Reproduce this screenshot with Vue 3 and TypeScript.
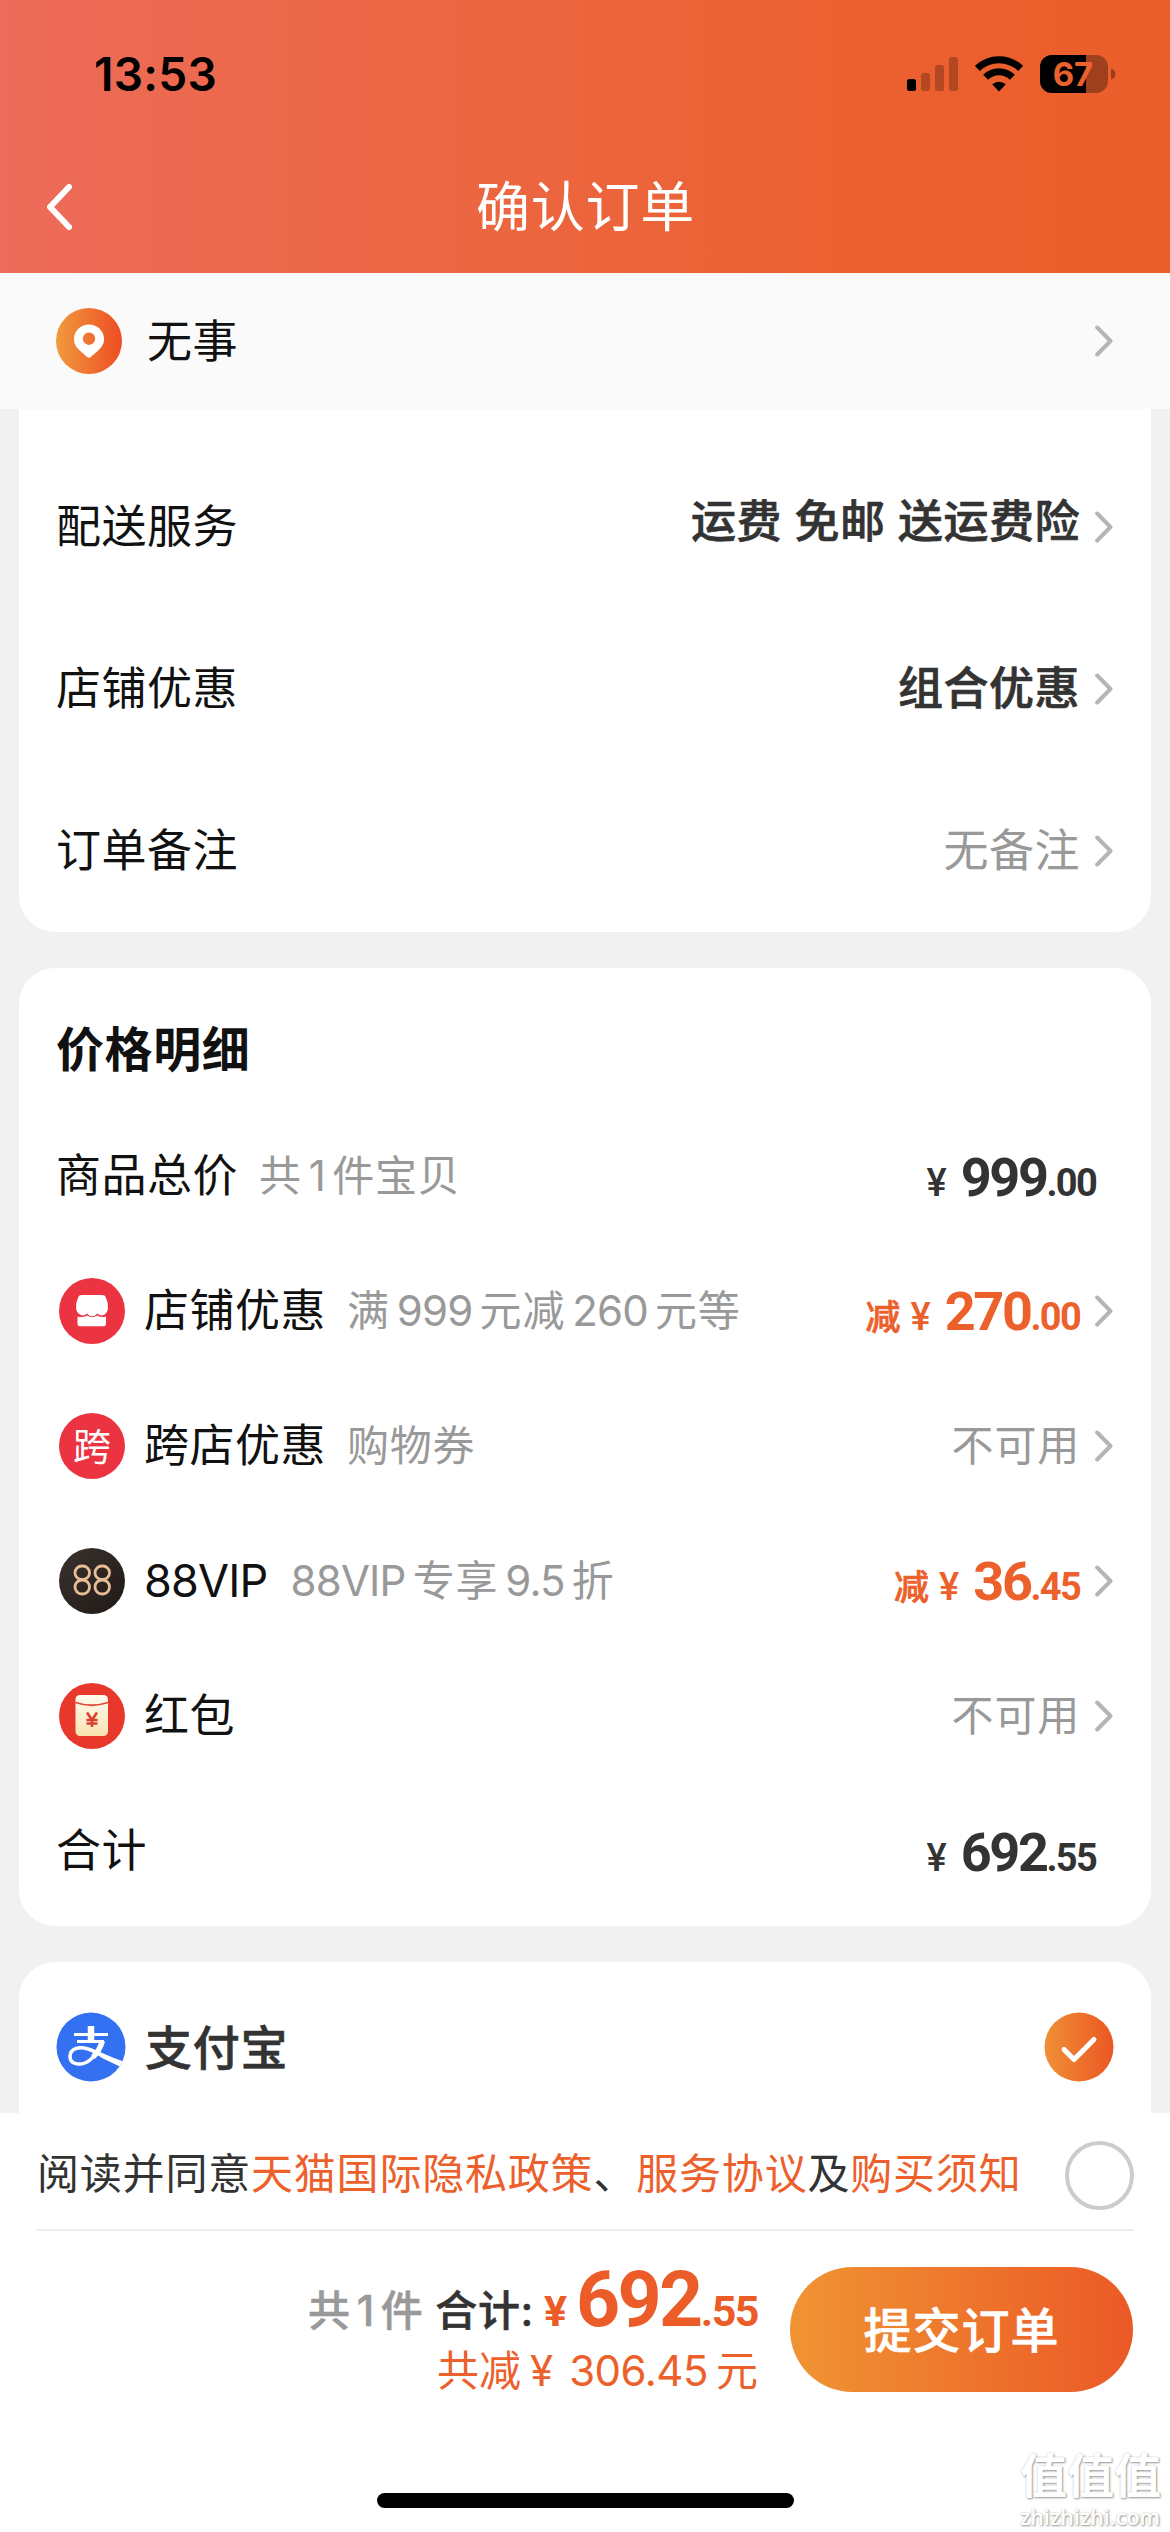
<script setup lang="ts">
interface OptionRow {
  label: string
  value: string
  tone: 'strong' | 'muted'
  raised?: boolean
}

interface PriceRow {
  label: string
  icon?: 'shop' | 'cross' | 'vip' | 'packet'
  note?: string
  minus?: boolean
  amount?: [string, string]
  disabled?: string
  arrow?: boolean
}

const options: OptionRow[] = [
  { label: '配送服务', value: '运费 免邮 送运费险', tone: 'strong', raised: true },
  { label: '店铺优惠', value: '组合优惠', tone: 'strong' },
  { label: '订单备注', value: '无备注', tone: 'muted' },
]

const prices: PriceRow[] = [
  { label: '商品总价', note: '共1件宝贝', amount: ['999', '.00'] },
  { label: '店铺优惠', icon: 'shop', note: '满999元减260元等', minus: true, amount: ['270', '.00'], arrow: true },
  { label: '跨店优惠', icon: 'cross', note: '购物券', disabled: '不可用', arrow: true },
  { label: '88VIP', icon: 'vip', note: '88VIP专享9.5折', minus: true, amount: ['36', '.45'], arrow: true },
  { label: '红包', icon: 'packet', disabled: '不可用', arrow: true },
  { label: '合计', amount: ['692', '.55'] },
]

// Latin runs get their own spacing between the Chinese characters.
const isLatin = (text: string) => /^[\w.]+$/.test(text)
const runs = (text: string) => text.split(/([\w.]+)/).filter(Boolean)
</script>

<template>
  <div class="screen">
    <header class="header">
      <div class="status">
        <span class="time">13:53</span>
        <div class="status-icons">
          <svg class="signal" width="51" height="38" viewBox="0 0 51 38">
            <rect x="0" y="24" width="9" height="12" rx="2.5" />
            <g opacity=".24">
              <rect x="14" y="18" width="9" height="18" rx="2.5" />
              <rect x="28" y="10" width="9" height="26" rx="2.5" />
              <rect x="42" y="2" width="9" height="34" rx="2.5" />
            </g>
          </svg>
          <svg class="wifi" width="48" height="38" viewBox="0 0 48 38">
            <g fill="none" stroke="#000" stroke-width="7">
              <path d="M2.400 13.400a31 31 0 0 1 43.200 0" />
              <path d="M10.600 22.200a19 19 0 0 1 26.800 0" />
            </g>
            <path d="M24 36.500l-6.800-7.200a10 10 0 0 1 13.600 0z" />
          </svg>
          <svg class="battery" width="77" height="38" viewBox="0 0 77 38">
            <defs>
              <clipPath id="battery-level"><rect width="46" height="38" /></clipPath>
            </defs>
            <rect width="68" height="38" rx="12" opacity=".32" />
            <rect width="68" height="38" rx="12" clip-path="url(#battery-level)" />
            <path d="M71 13.500q4.500 1.500 4.500 5.500t-4.500 5.500z" opacity=".35" />
            <text x="33" y="31" text-anchor="middle" class="battery-text">67</text>
          </svg>
        </div>
      </div>
      <div class="nav">
        <svg class="back" width="30" height="50" viewBox="0 0 30 50">
          <path d="M25 5L6 25l19 20" fill="none" stroke="#fff" stroke-width="6" stroke-linecap="round" stroke-linejoin="round" />
        </svg>
        <h1>确认订单</h1>
      </div>
    </header>

    <section class="address">
      <svg width="66" height="66" viewBox="0 0 66 66">
        <defs>
          <linearGradient id="pin-bg"><stop stop-color="#f09a3e" /><stop offset="1" stop-color="#ee4d23" /></linearGradient>
        </defs>
        <circle cx="33" cy="33" r="33" fill="url(#pin-bg)" />
        <path fill="#fff" fill-rule="evenodd" d="M33 16.500c8.500 0 15 6.500 15 14.500 0 5-2.200 8.200-5.500 11.200l-7.400 6.600q-2.100 1.700-4.200 0l-7.400-6.600C20.200 39.200 18 36 18 31c0-8 6.500-14.500 15-14.500zm0 8a6.200 6.200 0 1 0 0 12.400 6.200 6.200 0 0 0 0-12.400z" />
      </svg>
      <span class="label">无事</span>
      <svg class="arrow" width="18" height="32" viewBox="0 0 18 32"><path d="M2.200 2.500L15.500 16 2.200 29.500" /></svg>
    </section>

    <section class="card options">
      <div v-for="row in options" :key="row.label" class="option">
        <span class="label">{{ row.label }}</span>
        <span class="value" :class="[row.tone, { raised: row.raised }]">{{ row.value }}</span>
        <svg class="arrow" width="18" height="32" viewBox="0 0 18 32"><path d="M2.200 2.500L15.500 16 2.200 29.500" /></svg>
      </div>
    </section>

    <section class="card prices">
      <h2>价格明细</h2>
      <div v-for="row in prices" :key="row.label" class="price-row">
        <svg v-if="row.icon" class="badge" width="66" height="66" viewBox="0 0 66 66">
          <template v-if="row.icon === 'shop'">
            <circle cx="33" cy="33" r="33" fill="#eb3342" />
            <path fill="#fff" d="M22.500 17h21q2.500 0 3.300 2.200l2 6v6q-.8 5-5.800 6.300-2.600.2-4.600-2-2.300 2.800-5.200 2.800t-5.200-2.800q-2 2.200-4.600 2-5-1.300-6.200-6.300v-6l2-6q.8-2.200 3.300-2.200z" />
            <path fill="#fff" d="M18.500 38.500q5.200 1.500 9.700-1 5 3.600 10 0 4.300 2.500 8.800 1V46q0 2.200-2.200 2.200H20.700q-2.200 0-2.200-2.200z" />
          </template>
          <template v-else-if="row.icon === 'cross'">
            <circle cx="33" cy="33" r="33" fill="#eb3342" />
            <text x="33" y="47" text-anchor="middle" class="badge-cross">跨</text>
          </template>
          <template v-else-if="row.icon === 'vip'">
            <defs>
              <linearGradient id="vip-bg" x2="1" y2="1"><stop stop-color="#3b322e" /><stop offset="1" stop-color="#1f1916" /></linearGradient>
            </defs>
            <circle cx="33" cy="33" r="33" fill="url(#vip-bg)" />
            <g fill="none" stroke="#e6bd94" stroke-width="2.800">
              <rect x="16" y="18" width="14.500" height="13.500" rx="6.700" />
              <rect x="16" y="32" width="14.500" height="14" rx="6.900" />
              <rect x="36" y="18" width="14.500" height="13.500" rx="6.700" />
              <rect x="36" y="32" width="14.500" height="14" rx="6.900" />
            </g>
          </template>
          <template v-else>
            <defs>
              <linearGradient id="packet-bg" x2="0" y2="1"><stop stop-color="#fffaf0" /><stop offset="1" stop-color="#f9e3b0" /></linearGradient>
            </defs>
            <circle cx="33" cy="33" r="33" fill="#e8382c" />
            <rect x="16.500" y="12" width="32.500" height="41" rx="4.500" fill="url(#packet-bg)" />
            <path d="M16.500 19.500q16.200 5.500 32.500 0" fill="none" stroke="#e04a38" stroke-width="1.800" />
            <path d="M28 29.500l5 7.500 5-7.500M27.500 37h11M27.500 40.500h11M33 37v7" fill="none" stroke="#d8412f" stroke-width="2.500" />
          </template>
        </svg>
        <span class="label" :class="{ 'label-latin': isLatin(row.label) }">{{ row.label }}</span>
        <span v-if="row.note" class="note"><span v-for="(run, i) in runs(row.note)" :key="i" :class="{ latin: isLatin(run) }">{{ run }}</span></span>
        <span v-if="row.amount" class="amount" :class="{ minus: row.minus }">
          <span v-if="row.minus" class="cut">减</span><span class="yen">¥</span><span class="int">{{ row.amount[0] }}</span><span class="dec">{{ row.amount[1] }}</span>
        </span>
        <span v-if="row.disabled" class="disabled">{{ row.disabled }}</span>
        <svg v-if="row.arrow" class="arrow" width="18" height="32" viewBox="0 0 18 32"><path d="M2.200 2.500L15.500 16 2.200 29.500" /></svg>
      </div>
    </section>

    <section class="card payment">
      <svg width="70" height="70" viewBox="0 0 70 70">
        <defs><clipPath id="pay-disc"><circle cx="35" cy="35" r="34.500" /></clipPath></defs>
        <circle cx="35" cy="35" r="34.500" fill="#3370f2" />
        <g clip-path="url(#pay-disc)" fill="none" stroke="#fff">
          <path d="M35 14v14" stroke-width="6.500" />
          <path d="M18 22.500h34M21 29.500h27" stroke-width="3" />
          <path d="M46 29c-2 7-6 14-12 19-8 6.500-20 5-20-3.500 0-8 9-10.500 18-7.500 9 3 18 8.500 36 14.500" stroke-width="3.500" />
          <path d="M46.500 29c-2 6-5 12-9.500 16" stroke-width="5.500" />
          <path d="M36 39l34 12.500v6L46 46z" fill="#fff" stroke="none" />
        </g>
      </svg>
      <span class="pay-name">支付宝</span>
      <svg class="checked" width="70" height="70" viewBox="0 0 70 70">
        <defs>
          <linearGradient id="check-bg"><stop stop-color="#ef8f35" /><stop offset="1" stop-color="#eb5724" /></linearGradient>
        </defs>
        <circle cx="35" cy="35" r="34.500" fill="url(#check-bg)" />
        <path d="M20 37.500l10 10L50 27.500" fill="none" stroke="#fff" stroke-width="5" stroke-linecap="round" stroke-linejoin="round" />
      </svg>
    </section>

    <footer class="footer">
      <div class="terms">
        <p>阅读并同意<a>天猫国际隐私政策</a>、<a>服务协议</a>及<a>购买须知</a></p>
        <span class="radio"></span>
      </div>
      <div class="checkout">
        <div class="summary">
          <div class="total">
            <span class="count">共<span class="one">1</span>件</span><span class="sum">合计:</span><span class="yen">¥</span><span class="int">692</span><span class="dec">.55</span>
          </div>
          <div class="saved">共减<span class="saved-yen">¥</span><span class="saved-num">306.45</span>元</div>
        </div>
        <button class="submit">提交订单</button>
      </div>
      <div class="home-bar"></div>
      <div class="watermark"><b>值值值</b><span>zhizhizhi.com</span></div>
    </footer>
  </div>
</template>

<style>
body {
  margin: 0;
}
</style>

<style scoped>
.screen {
  width: 1170px;
  height: 2532px;
  display: flex;
  flex-direction: column;
  overflow: hidden;
  box-sizing: border-box;
  background: #f1f1f1;
  color: #111;
  font-family: Inter, 'Noto Sans CJK SC', sans-serif;
}

h1,
h2,
p {
  margin: 0;
}

svg {
  flex: none;
  display: block;
}

.header {
  height: 273px;
  flex: none;
  background: linear-gradient(90deg, #ed6b5a 0%, #ec6744 35%, #eb602f 75%, #eb5e2b 100%);
}

.status {
  height: 148px;
  display: flex;
  justify-content: space-between;
  align-items: center;
  padding: 0 53px 0 94px;
  box-sizing: border-box;
  color: #000;
}

.time {
  font-size: 46px;
  font-weight: 600;
  line-height: 60px;
  letter-spacing: 0.3px;
}

.status-icons {
  display: flex;
}

.wifi {
  margin: 0 17px;
}

.battery-text {
  font: 700 33px Inter, sans-serif;
  fill: #eb602f;
}

.nav {
  height: 118px;
  display: flex;
  align-items: center;
  padding-left: 44px;
}

.nav h1 {
  flex: 1;
  margin-right: 73px;
  padding-top: 2px;
  text-align: center;
  color: #fff;
  font-size: 54px;
  line-height: 80px;
  font-weight: 400;
  letter-spacing: 0.7px;
}

.address {
  height: 136px;
  flex: none;
  display: flex;
  align-items: center;
  background: #fafafa;
  padding: 0 57px 0 56px;
}

.address .label {
  margin-left: 25px;
  padding-top: 2px;
}

.address .arrow {
  margin-left: auto;
}

.label {
  font-size: 45px;
  line-height: 66px;
  letter-spacing: 0.5px;
  white-space: nowrap;
}

.label-latin {
  letter-spacing: -0.8px;
}

.arrow path {
  fill: none;
  stroke: #b5b5b5;
  stroke-width: 4;
  stroke-linecap: round;
  stroke-linejoin: round;
}

.card {
  margin: 0 19px;
  background: #fff;
  flex: none;
  box-sizing: border-box;
}

.options {
  height: 523px;
  padding: 37px 38px 0 37px;
  border-radius: 0 0 36px 36px;
}

.option {
  height: 162px;
  display: flex;
  align-items: center;
}

.value {
  margin-left: auto;
  margin-right: 15px;
  font-size: 45px;
  line-height: 66px;
  letter-spacing: 0.5px;
}

.value.strong {
  color: #333;
  font-weight: 500;
  -webkit-text-stroke: 0.7px currentColor;
}

.value.muted {
  color: #999;
}

.value.raised {
  padding-bottom: 10px;
}

.prices {
  margin-top: 36px;
  height: 958px;
  padding: 47px 38px 0 37px;
  border-radius: 36px;
}

.prices h2 {
  height: 93px;
  font-size: 48px;
  line-height: 70px;
  letter-spacing: 0.6px;
  font-weight: 700;
}

.price-row {
  height: 135px;
  display: flex;
  align-items: center;
}

.badge {
  margin: 0 19px 0 3px;
}

.badge-cross {
  font: 400 38px 'Noto Sans CJK SC', sans-serif;
  fill: #fff;
}

.note,
.disabled {
  font-size: 42px;
  line-height: 62px;
  letter-spacing: 0.8px;
  color: #999;
  white-space: nowrap;
}

.note {
  display: flex;
  margin-left: 21px;
}

.latin {
  margin: 0 7px;
  letter-spacing: -0.8px;
}

.latin:first-child {
  margin-left: 2px;
}

.disabled {
  margin-left: auto;
  margin-right: 15px;
}

.amount {
  margin-left: auto;
  margin-right: 17px;
  display: flex;
  align-items: baseline;
  color: #333;
  font-family: Roboto, 'Noto Sans CJK SC', sans-serif;
  font-weight: 700;
  line-height: 62px;
  padding-top: 9px;
}

.amount.minus {
  color: #ec602c;
  margin-right: 15px;
}

.cut {
  font-size: 35px;
  font-weight: 500;
  margin-right: 10px;
  -webkit-text-stroke: 0.7px currentColor;
}

.yen {
  font-size: 38px;
  font-weight: 500;
}

.amount .yen {
  margin-right: 14px;
}

.amount .int {
  font-size: 54px;
  letter-spacing: -2.4px;
}

.amount .dec {
  font-size: 38px;
  letter-spacing: -1.7px;
}

.payment {
  margin-top: 36px;
  height: 151px;
  padding: 50px 37px 0 37px;
  border-radius: 36px 36px 0 0;
  display: flex;
  align-items: flex-start;
}

.pay-name {
  margin-left: 19px;
  color: #333;
  font-size: 47px;
  line-height: 72px;
  letter-spacing: 0.8px;
  font-weight: 500;
  -webkit-text-stroke: 0.6px currentColor;
}

.checked {
  margin-left: auto;
}

.footer {
  flex: 1;
  background: #fff;
  position: relative;
}

.terms {
  height: 118px;
  margin: 0 36px;
  padding-top: 5px;
  box-sizing: border-box;
  border-bottom: 2px solid #eee;
  display: flex;
  align-items: center;
  justify-content: space-between;
}

.terms p {
  margin-left: 1px;
  font-size: 42px;
  line-height: 62px;
  letter-spacing: 0.8px;
  color: #333;
  white-space: nowrap;
}

.terms a {
  color: #ec602c;
}

.radio {
  width: 61px;
  height: 61px;
  margin-top: 4px;
  border: 4px solid #ccc;
  border-radius: 50%;
}

.checkout {
  display: flex;
  justify-content: flex-end;
  padding: 37px 37px 0 0;
}

.summary {
  width: 520px;
  margin-right: 32px;
}

.total {
  display: flex;
  align-items: baseline;
  justify-content: flex-end;
  height: 72px;
  line-height: 65px;
  color: #ec5c29;
}

.count,
.sum {
  font-size: 42px;
  font-weight: 500;
  letter-spacing: 0.6px;
  color: #999;
  -webkit-text-stroke: 0.5px currentColor;
}

.one {
  margin: 0 6px;
}

.sum {
  margin-left: 12px;
  margin-right: 10px;
  color: #333;
}

.total .yen,
.total .int,
.total .dec {
  font-family: Roboto, sans-serif;
  font-weight: 700;
}

.total .yen {
  font-size: 43px;
  margin-right: 9px;
}

.total .int {
  font-size: 77px;
  letter-spacing: -2.6px;
}

.total .dec {
  font-size: 43px;
  letter-spacing: -1.5px;
}

.saved {
  text-align: right;
  font-size: 42px;
  line-height: 62px;
  color: #ec602c;
}

.saved-yen {
  margin: 0 16px 0 9px;
}

.saved-num {
  margin-right: 8px;
  letter-spacing: -0.5px;
}

.submit {
  width: 343px;
  height: 125px;
  margin-top: -1px;
  border: 0;
  padding: 0 0 5px;
  border-radius: 63px;
  background: linear-gradient(90deg, #f09433, #eb5926);
  color: #fff;
  font: 500 48px Inter, 'Noto Sans CJK SC', sans-serif;
  letter-spacing: 1px;
  -webkit-text-stroke: 0.6px currentColor;
}

.home-bar {
  position: absolute;
  left: 377px;
  bottom: 24px;
  width: 417px;
  height: 15px;
  border-radius: 8px;
  background: #000;
}

.watermark {
  position: absolute;
  right: 9px;
  bottom: 1px;
  width: 141px;
  display: flex;
  flex-direction: column;
  color: #fff;
  font-family: 'Noto Sans CJK SC', sans-serif;
  text-shadow: 1px 1px 2px #999, 0 0 2px #ccc;
  white-space: nowrap;
}

.watermark b {
  font-size: 47px;
  line-height: 60px;
}

.watermark span {
  font: 600 21.500px/28px 'Open Sans', sans-serif;
}
</style>
